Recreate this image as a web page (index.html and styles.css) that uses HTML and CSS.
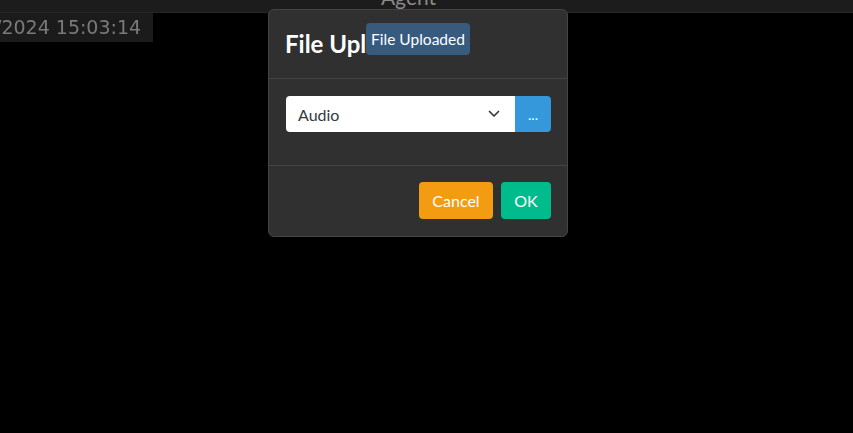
FILE: index.html
```html
<!DOCTYPE html>
<html>
<head>
<meta charset="utf-8">
<link rel="stylesheet" href="styles.css">
</head>
<body>
<div class="topbar"><span class="brand">Agent</span></div>
<div class="clock">/2024 15:03:14</div>
<div class="modal">
  <div class="modal-header">
    <h5 class="modal-title">File Upload</h5>
    <div class="tip">File Uploaded</div>
  </div>
  <div class="modal-body">
    <div class="input-group">
      <div class="select">
        <span>Audio</span>
        <svg class="chev" width="12" height="8" viewBox="0 0 12 8"><path d="M1.5 1.5 L6 6 L10.5 1.5" fill="none" stroke="#343a40" stroke-width="1.7" stroke-linecap="round" stroke-linejoin="round"/></svg>
      </div>
      <button class="btn btn-info">...</button>
    </div>
  </div>
  <div class="modal-footer">
    <button class="btn btn-warning">Cancel</button>
    <button class="btn btn-success">OK</button>
  </div>
</div>
</body>
</html>
```
FILE: styles.css
```css
html, body { margin: 0; padding: 0; }
body {
  background: #000;
  width: 853px;
  height: 433px;
  overflow: hidden;
  font-family: Lato, "Open Sans", sans-serif;
  position: relative;
}
.topbar {
  height: 12px;
  background: #1c1c1c;
  border-bottom: 1px solid #262626;
  overflow: hidden;
  display: flex;
  justify-content: center;
}
.brand {
  color: #8a8a8a;
  font-size: 21px;
  line-height: 20px;
  margin-top: -13px;
  transform: translateX(-18px);
}
.clock {
  width: 153px;
  height: 29px;
  background: #1b1b1b;
  color: #7a7a7a;
  font-family: "DejaVu Sans", sans-serif;
  font-size: 19px;
  line-height: 28px;
  white-space: nowrap;
  overflow: hidden;
  text-indent: -5px;
  filter: blur(0.4px);
}
.modal {
  position: absolute;
  left: 268px;
  top: 9px;
  width: 298px;
  background: #303030;
  border: 1px solid #444;
  border-radius: 6px;
}
.modal-header {
  height: 68px;
  border-bottom: 1px solid #444;
  padding: 0 16px;
  display: flex;
  align-items: center;
  position: relative;
}
.modal-title {
  margin: 0;
  color: #fff;
  font-size: 24px;
  font-weight: 700;
  line-height: 36px;
}
.tip {
  position: absolute;
  left: 97px;
  top: 13px;
  width: 104px;
  height: 32px;
  background: #375a7f;
  border-radius: 4px;
  color: #fff;
  font-size: 15.5px;
  line-height: 32px;
  text-align: center;
}
.modal-body {
  padding: 17px 16px 33px 17px;
  border-bottom: 1px solid #444;
}
.input-group { display: flex; height: 36px; }
.select {
  flex: 1;
  background: #fff;
  border-radius: 4px 0 0 4px;
  display: flex;
  align-items: center;
  justify-content: space-between;
  padding: 0 15px 0 12px;
  color: #343a40;
  font-size: 16px;
}
.chev { margin-top: 0; }
.btn {
  border: 0;
  font-family: Lato, sans-serif;
  font-size: 16px;
  color: #fff;
  cursor: pointer;
}
.btn-info {
  width: 36px;
  background: #3498db;
  border-radius: 0 4px 4px 0;
  font-size: 14px;
  padding: 0;
}
.modal-footer {
  display: flex;
  justify-content: flex-end;
  gap: 8px;
  padding: 16px 16px 17px;
}
.btn-warning, .btn-success {
  height: 37px;
  border-radius: 4px;
  padding: 0 13px;
}
.btn-warning { background: #f39c12; width: 74px; }
.btn-success { background: #00bc8c; width: 50px; }
```
